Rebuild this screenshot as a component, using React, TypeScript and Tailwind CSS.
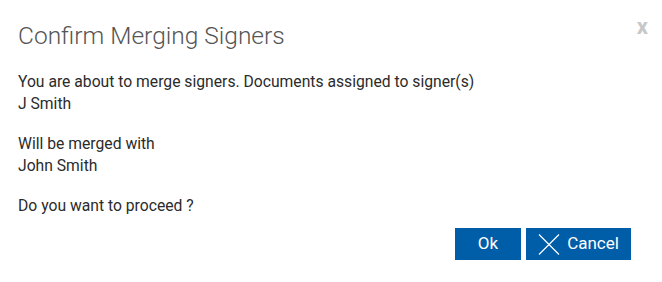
import React from 'react';

const App: React.FC = () => {
  return (
    <div className="w-[662px] h-[282px] bg-white relative font-['Roboto',sans-serif]">
      <button className="absolute right-[14px] top-[16px] text-[22px] font-bold leading-none text-[#c8c8c8]">
        x
      </button>
      <div className="pl-[18px] pr-[31px] pt-[22px]">
        <h2 className="text-[24.5px] font-light text-[#555] leading-[28px]">
          Confirm Merging Signers
        </h2>
        <div className="mt-[21px] text-[15.7px] leading-[22px] text-[#2b2b2b]">
          <p>
            You are about to merge signers. Documents assigned to signer(s)
            <br />
            J Smith
          </p>
          <p className="mt-[18px]">
            Will be merged with
            <br />
            John Smith
          </p>
          <p className="mt-[18px]">Do you want to proceed ?</p>
        </div>
        <div className="mt-[11px] flex justify-end gap-[5px]">
          <button className="w-[66px] h-[32px] bg-[#005da8] text-white text-[17px] flex items-center justify-center">
            Ok
          </button>
          <button className="w-[105px] h-[32px] bg-[#005da8] text-white text-[17px] flex items-center justify-center gap-[7px]">
            <svg width="22" height="21" viewBox="0 0 22 21" fill="none" stroke="white" strokeWidth="1.2">
              <path d="M1 0.5 L21 20.5 M21 0.5 L1 20.5" />
            </svg>
            <span>Cancel</span>
          </button>
        </div>
      </div>
    </div>
  );
};

export default App;
